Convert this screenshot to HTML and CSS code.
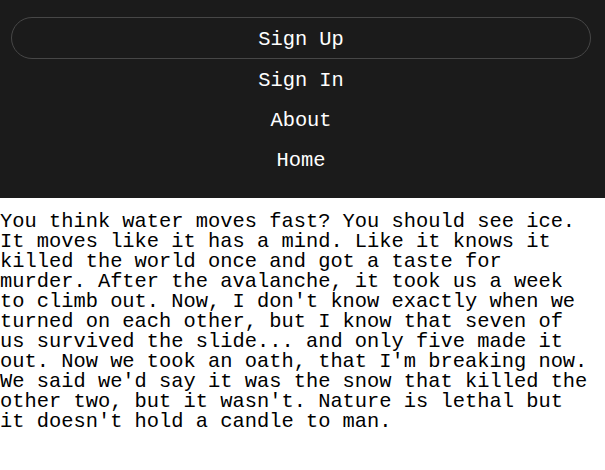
FILE: index.html
```html
<!DOCTYPE html>
<html lang="en">
<head>
<meta charset="utf-8">
<title>Story</title>
<link rel="stylesheet" href="styles.css">
</head>
<body>
<header class="site-header">
  <nav class="nav">
    <a class="nav-link nav-link--pill" href="#">Sign Up</a>
    <a class="nav-link" href="#">Sign In</a>
    <a class="nav-link" href="#">About</a>
    <a class="nav-link" href="#">Home</a>
  </nav>
</header>
<main class="content">
  <p class="story">You think water moves fast? You should see ice. It moves like it has a mind. Like it knows it killed the world once and got a taste for murder. After the avalanche, it took us a week to climb out. Now, I don't know exactly when we turned on each other, but I know that seven of us survived the slide... and only five made it out. Now we took an oath, that I'm breaking now. We said we'd say it was the snow that killed the other two, but it wasn't. Nature is lethal but it doesn't hold a candle to man.</p>
</main>
</body>
</html>
```
FILE: styles.css
```css
html, body {
  margin: 0;
  padding: 0;
  background: #ffffff;
}

body {
  font-family: "Liberation Mono", "DejaVu Sans Mono", monospace;
  font-size: 20.4px;
  color: #000000;
}

.site-header {
  background: #1b1b1b;
  padding: 17px 14px 19px 11px;
}

.nav {
  display: flex;
  flex-direction: column;
}

.nav-link {
  box-sizing: border-box;
  display: flex;
  align-items: center;
  justify-content: center;
  height: 40px;
  padding-top: 4px;
  color: #ffffff;
  text-decoration: none;
  line-height: 1;
}

.nav-link--pill {
  height: 42px;
  border: 1px solid #474747;
  border-radius: 21px;
}

.content {
  padding: 0;
}

.story {
  margin: 14px 0 0 0;
  width: 592px;
  line-height: 20px;
}
```
